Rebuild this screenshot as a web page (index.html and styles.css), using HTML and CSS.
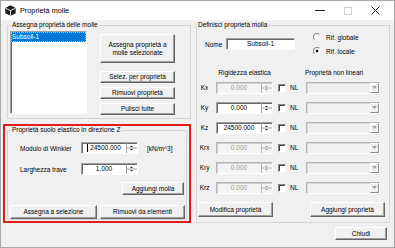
FILE: index.html
```html
<!DOCTYPE html>
<html>
<head>
<meta charset="utf-8">
<link rel="stylesheet" href="styles.css">
</head>
<body>
<div class="window">
  <div class="titlebar">
    <svg class="appicon" viewBox="0 0 11 11"><path d="M5.5 0.3L10.7 3V8.3L5.5 10.8L0.3 8.3V3Z" fill="#1b1b1b"/><path d="M0.6 3.2L5.5 5.6L10.4 3.2M5.5 5.6V10.6" stroke="#fff" stroke-width="0.9" fill="none"/></svg>
    <span class="title">Proprietà molle</span>
    <div class="controls">
      <span class="ctl"><svg width="10" height="1"><path d="M0 0.5H10" stroke="#1a1a1a"/></svg></span>
      <span class="ctl"><svg width="8" height="8"><rect x="0.5" y="0.5" width="7" height="7" fill="none" stroke="#cfcfcf"/></svg></span>
      <span class="ctl"><svg width="9" height="9"><path d="M0.5 0.5L8.5 8.5M8.5 0.5L0.5 8.5" stroke="#1a1a1a"/></svg></span>
    </div>
  </div>
  <div class="client">
    <div class="columns">
      <div class="leftcol">
        <fieldset class="group g-assign">
          <legend>Assegna proprietà delle molle</legend>
          <div class="assign-body">
            <div class="listbox"><div class="item sel">Subsoil-1</div></div>
            <div class="btncol">
              <button class="btn b-tall">Assegna proprietà a<br>molle selezionate</button>
              <button class="btn">Selez. per proprietà</button>
              <button class="btn">Rimuovi proprietà</button>
              <button class="btn">Pulisci tutte</button>
            </div>
          </div>
        </fieldset>
        <div class="highlight">
          <fieldset class="group g-soil">
            <legend>Proprietà suolo elastico in direzione Z</legend>
            <div class="soil-fields">
              <div class="frow">
                <span class="flbl">Modulo di Winkler</span>
                <div class="spin s-soil"><span class="val"><span class="caret"></span>24500.000</span><svg class="ud" viewBox="0 0 11 10"><path d="M0.5 0V10M1 5H11" stroke="#a0a0a0"/><path d="M4 4H7L5.5 2.5Z M4 6H7L5.5 7.5Z" fill="#222"/></svg></div>
                <span class="unit">[kN/m^3]</span>
              </div>
              <div class="frow r2">
                <span class="flbl">Larghezza trave</span>
                <div class="spin s-soil"><span class="val">1.000</span><svg class="ud" viewBox="0 0 11 10"><path d="M0.5 0V10M1 5H11" stroke="#a0a0a0"/><path d="M4 4H7L5.5 2.5Z M4 6H7L5.5 7.5Z" fill="#222"/></svg></div>
              </div>
            </div>
            <button class="btn b-molla">Aggiungi molla</button>
            <div class="soil-btns">
              <button class="btn b-asel">Assegna a selezione</button>
              <button class="btn b-rem">Rimuovi da elementi</button>
            </div>
          </fieldset>
        </div>
      </div>
      <fieldset class="group g-def">
        <legend>Definisci proprietà molla</legend>
        <div class="def-top">
          <span class="nlbl">Nome</span>
          <div class="name-edit">Subsoil-1</div>
          <div class="radios">
            <div class="radio"><span class="rb"></span><span class="rtxt">Rif. globale</span></div>
            <div class="radio"><span class="rb on"></span><span class="rtxt">Rif. locale</span></div>
          </div>
        </div>
        <div class="khead"><span class="kh1">Rigidezza elastica</span><span class="kh2">Proprietà non lineari</span></div>
        <div class="krows">
          <div class="krow"><span class="klbl">Kx</span><div class="spin s-k dis"><span class="val">0.000</span><svg class="ud" viewBox="0 0 11 10"><path d="M0.5 0V10M1 5H11" stroke="#b4b4b4"/><path d="M4 4H7L5.5 2.5Z M4 6H7L5.5 7.5Z" fill="#9a9a9a"/></svg></div><span class="chk"></span><span class="nl">NL</span><div class="combo"><span class="drop"><svg width="5" height="3"><path d="M0 0H5L2.5 3Z" fill="#a0a0a0"/></svg></span></div></div>
          <div class="krow"><span class="klbl">Ky</span><div class="spin s-k"><span class="val">0.000</span><svg class="ud" viewBox="0 0 11 10"><path d="M0.5 0V10M1 5H11" stroke="#a0a0a0"/><path d="M4 4H7L5.5 2.5Z M4 6H7L5.5 7.5Z" fill="#222"/></svg></div><span class="chk"></span><span class="nl">NL</span><div class="combo"><span class="drop"><svg width="5" height="3"><path d="M0 0H5L2.5 3Z" fill="#a0a0a0"/></svg></span></div></div>
          <div class="krow"><span class="klbl">Kz</span><div class="spin s-k"><span class="val">24500.000</span><svg class="ud" viewBox="0 0 11 10"><path d="M0.5 0V10M1 5H11" stroke="#a0a0a0"/><path d="M4 4H7L5.5 2.5Z M4 6H7L5.5 7.5Z" fill="#222"/></svg></div><span class="chk"></span><span class="nl">NL</span><div class="combo"><span class="drop"><svg width="5" height="3"><path d="M0 0H5L2.5 3Z" fill="#a0a0a0"/></svg></span></div></div>
          <div class="krow"><span class="klbl">Krx</span><div class="spin s-k dis"><span class="val">0.000</span><svg class="ud" viewBox="0 0 11 10"><path d="M0.5 0V10M1 5H11" stroke="#b4b4b4"/><path d="M4 4H7L5.5 2.5Z M4 6H7L5.5 7.5Z" fill="#9a9a9a"/></svg></div><span class="chk"></span><span class="nl">NL</span><div class="combo"><span class="drop"><svg width="5" height="3"><path d="M0 0H5L2.5 3Z" fill="#a0a0a0"/></svg></span></div></div>
          <div class="krow"><span class="klbl">Kry</span><div class="spin s-k dis"><span class="val">0.000</span><svg class="ud" viewBox="0 0 11 10"><path d="M0.5 0V10M1 5H11" stroke="#b4b4b4"/><path d="M4 4H7L5.5 2.5Z M4 6H7L5.5 7.5Z" fill="#9a9a9a"/></svg></div><span class="chk"></span><span class="nl">NL</span><div class="combo"><span class="drop"><svg width="5" height="3"><path d="M0 0H5L2.5 3Z" fill="#a0a0a0"/></svg></span></div></div>
          <div class="krow"><span class="klbl">Krz</span><div class="spin s-k dis"><span class="val">0.000</span><svg class="ud" viewBox="0 0 11 10"><path d="M0.5 0V10M1 5H11" stroke="#b4b4b4"/><path d="M4 4H7L5.5 2.5Z M4 6H7L5.5 7.5Z" fill="#9a9a9a"/></svg></div><span class="chk"></span><span class="nl">NL</span><div class="combo"><span class="drop"><svg width="5" height="3"><path d="M0 0H5L2.5 3Z" fill="#a0a0a0"/></svg></span></div></div>
        </div>
        <div class="def-btns">
          <button class="btn b-mod">Modifica proprietà</button>
          <button class="btn b-addp">Aggiungi proprietà</button>
        </div>
      </fieldset>
    </div>
    <div class="footer"><button class="btn b-close">Chiudi</button></div>
  </div>
</div>
</body>
</html>
```

FILE: styles.css
```css
* { box-sizing: border-box; }
html, body { margin: 0; padding: 0; background: #fff; }
body { font-family: "Liberation Sans", Arial, sans-serif; font-size: 6.5px; color: #000; }

.window { width: 395px; height: 248px; border: 1px solid #a9a9a9; display: flex; flex-direction: column; background: #fff; }
.titlebar { height: 19px; flex: none; display: flex; align-items: center; background: #fff; padding-right: 5px; }
.appicon { width: 11px; height: 11px; margin-left: 4px; flex: none; }
.title { margin-left: 4px; font-size: 7.3px; }
.controls { margin-left: auto; display: flex; height: 100%; }
.ctl { width: 27.5px; display: flex; align-items: center; justify-content: center; }
.ctl svg { display: block; }

.client { flex: 1; background: #f0f0f0; padding: 1px 4px 0 2px; display: flex; flex-direction: column; }
.columns { display: flex; }
.leftcol { width: 189px; display: flex; flex-direction: column; }

.group { margin: 0; padding: 0; border: 1px solid #d5d5d5; min-width: 0; }
.group > legend { padding: 0 1px; margin-left: 3px; font-size: 6.5px; line-height: 8px; }

.btn { font-family: inherit; font-size: 6.5px; background: #f0f0f0; border: 1px solid; border-color: #fff #646464 #646464 #fff; box-shadow: inset -1px -1px #a0a0a0; padding: 0; color: #000; height: 12px; line-height: 1.15; display: flex; align-items: center; justify-content: center; text-align: center; margin: 0; }

/* left top group */
.g-assign { margin-left: 4px; width: 184px; height: 98px; }
.assign-body { display: flex; padding: 2px 0 0 2px; }
.listbox { width: 77px; height: 83px; background: #fff; border: 1px solid; border-color: #a0a0a0 #fff #fff #a0a0a0; box-shadow: inset 1px 1px #696969; }
.item.sel { background: #0078d7; color: #fff; height: 10px; line-height: 10px; padding-left: 1px; outline: 1px dotted #9cc8ee; outline-offset: -1px; }
.btncol { display: flex; flex-direction: column; margin-left: 13px; padding-top: 3px; gap: 4px; width: 75px; }
.b-tall { height: 29px; margin-bottom: 4px; }

/* highlighted group */
.highlight { margin-top: 5px; width: 188px; height: 99px; border: 2px solid #e21b1b; padding-left: 2px; }
.g-soil { width: 180px; height: 94px; }
.soil-fields { padding-left: 12px; }
.frow { display: flex; align-items: center; height: 12px; margin-top: 8px; }
.frow.r2 { margin-top: 9px; }
.flbl { width: 61px; }
.unit { margin-left: 9px; }
.spin { display: flex; height: 12px; background: #fff; border: 1px solid; border-color: #a0a0a0 #fff #fff #a0a0a0; box-shadow: inset 1px 1px #696969; }
.s-soil { width: 57px; }
.spin .val { flex: 1; text-align: center; line-height: 10px; display: flex; justify-content: center; align-items: center; gap: 1px; }
.caret { width: 1px; height: 8px; background: #000; margin-right: 1px; }
.ud { width: 11px; height: 10px; flex: none; }
.b-molla { margin-top: 7px; margin-left: 114px; width: 62px; height: 13px; }
.soil-btns { display: flex; margin-top: 10px; padding-left: 2px; gap: 3px; }
.b-asel { width: 87px; height: 14px; }
.b-rem { width: 85px; height: 14px; }

/* right group */
.g-def { margin-left: 4px; width: 194px; height: 202px; }
.g-def > legend { margin-left: 0; }
.def-top { display: flex; align-items: center; height: 26px; margin-top: 2px; padding-left: 8px; }
.nlbl { width: 21px; }
.name-edit { width: 69px; height: 12px; background: #fff; border: 1px solid; border-color: #a0a0a0 #fff #fff #a0a0a0; box-shadow: inset 1px 1px #696969; text-align: center; line-height: 10px; }
.radios { margin-left: 18px; display: flex; flex-direction: column; }
.radio { display: flex; align-items: center; height: 14px; }
.rb { width: 8px; height: 8px; border-radius: 50%; background: #fff; border: 1px solid; border-color: #8a8a8a #f4f4f4 #f4f4f4 #8a8a8a; }
.rb.on { background: radial-gradient(circle, #111 1.2px, #fff 1.7px); }
.rtxt { margin-left: 5px; }
.khead { display: flex; height: 8px; line-height: 8px; margin-top: 12px; }
.kh1 { margin-left: 19px; width: 57px; text-align: center; }
.kh2 { margin-left: 32px; }
.krows { display: flex; flex-direction: column; gap: 7px; margin-top: 4px; }
.krow { display: flex; align-items: center; height: 13px; }
.klbl { width: 15px; text-align: center; }
.s-k { width: 57px; margin-left: 4px; }
.spin.dis { background: #f4f4f4; color: #9a9a9a; border-color: #b4b4b4 #fff #fff #b4b4b4; box-shadow: inset 1px 1px #d0d0d0; }
.chk { width: 8px; height: 8px; margin-left: 5px; background: #fff; border: 1px solid; border-color: #8a8a8a #fff #fff #8a8a8a; box-shadow: inset 1px 1px #404040; }
.nl { margin-left: 4px; width: 16px; }
.combo { width: 74px; height: 12px; display: flex; justify-content: flex-end; background: #f0f0f0; border: 1px solid; border-color: #b4b4b4 #fff #fff #b4b4b4; box-shadow: inset 1px 1px #d8d8d8; }
.drop { width: 9px; height: 100%; display: flex; align-items: center; justify-content: center; border: 1px solid; border-color: #fff #8a8a8a #8a8a8a #fff; background: #f0f0f0; }
.drop svg { display: block; }
.def-btns { display: flex; margin-top: 8px; }
.b-mod { margin-left: 1px; width: 75px; height: 15px; }
.b-addp { margin-left: 37px; width: 75px; height: 15px; }

.footer { display: flex; justify-content: flex-end; margin-top: 4px; padding-right: 3px; }
.b-close { width: 52px; height: 13px; }
```
